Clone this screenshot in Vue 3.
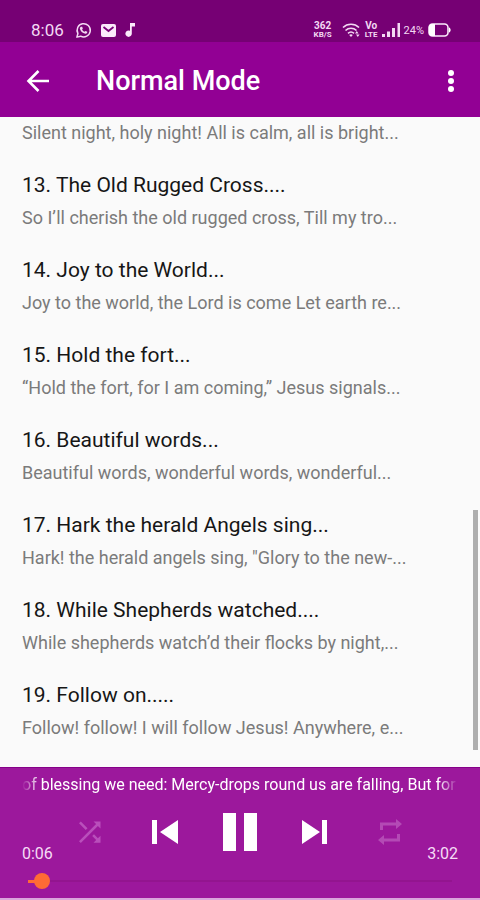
<template>
  <div class="screen">
    <div class="status-bar">
      <div class="status-left">
        <span class="clock">8:06</span>
        <svg width="17" height="17" viewBox="0 0 18 18">
          <path d="M2 16l1.1-3.8A7 7 0 1 1 6 15z" fill="none" stroke="#f3d9f3" stroke-width="1.6" stroke-linejoin="round" />
          <path d="M6.3 4.9l1.3.2.7 1.8-.8 1a5 5 0 0 0 2.6 2.5l1-.9 1.9.9c.2 1.4-.9 2.2-2 2.1-3.1-.4-5.4-2.7-5.900-5.500 0-.9.4-1.700 1.200-2.100z" fill="#f3d9f3" />
        </svg>
        <svg width="15" height="13" viewBox="0 0 15 13">
          <rect width="15" height="13" rx="2" fill="#fbeafb" />
          <path d="M2.500 3l5 4 5-4" fill="none" stroke="#780078" stroke-width="1.800" />
        </svg>
        <svg width="11" height="14" viewBox="0 0 11 14">
          <path d="M5 0h5v3.500H6.800v7.200A3.200 3.200 0 1 1 5 7.800z" fill="#fbeafb" />
        </svg>
      </div>
      <div class="status-right">
        <span class="stacked speed"><span class="top">362</span><span>KB/S</span></span>
        <svg width="19" height="15" viewBox="0 0 19 15">
          <g fill="none" stroke="#f3d9f3" stroke-width="1.600">
            <path d="M1 4.500a11.500 11.500 0 0 1 16 0" />
            <path d="M3.500 7.500a8 8 0 0 1 11 0" />
            <path d="M6 10.300a4.600 4.600 0 0 1 6 0" />
          </g>
          <path d="M7.200 12a2.600 2.600 0 0 1 3.600 0L9 14zM13 10.500l1.800-2.500 1.700 2.500zM14 11.500h3.600L15.800 14z" fill="#f3d9f3" />
        </svg>
        <span class="stacked"><span class="top">Vo</span><span>LTE</span></span>
        <svg width="18" height="14" viewBox="0 0 18 14">
          <path d="M0 11h3v3H0zM5 8.500h3V14H5zM10 5h3v9h-3zM15.500 0H18v14h-2.500z" fill="#f3d9f3" />
        </svg>
        <span class="percent">24%</span>
        <svg width="23" height="14" viewBox="0 0 23 14">
          <rect x="1" y="1" width="19" height="12" rx="3.500" fill="none" stroke="#fbeafb" stroke-width="1.600" />
          <path d="M4 1h3v12H4a3 3 0 0 1-3-3V4a3 3 0 0 1 3-3zM21 4.500c2.200.6 2.200 4.400 0 5z" fill="#fff" />
        </svg>
      </div>
    </div>

    <header class="toolbar">
      <button class="icon-btn" aria-label="Back">
        <svg width="24" height="24" viewBox="0 0 24 24">
          <path d="M12.500 2L2.500 12l10 10M2.500 12H23" fill="none" stroke="#fff" stroke-width="2.600" />
        </svg>
      </button>
      <h1>Normal Mode</h1>
      <button class="icon-btn" aria-label="More options">
        <svg width="8" height="24" viewBox="0 0 8 24">
          <g fill="#fff">
            <circle cx="4" cy="4" r="3" />
            <circle cx="4" cy="12" r="3" />
            <circle cx="4" cy="20" r="3" />
          </g>
        </svg>
      </button>
    </header>

    <main class="list-area">
      <ul class="song-list">
        <li v-for="song in songs" :key="song.line">
          <h2 v-if="song.title">{{ song.title }}</h2>
          <p>{{ song.line }}</p>
        </li>
      </ul>
      <div class="scroll-thumb"></div>
    </main>

    <footer class="player">
      <div class="ticker">of blessing we need: Mercy-drops round us are falling, But for</div>
      <div class="deck">
        <span class="time">{{ formatTime(position) }}</span>
        <div class="controls">
          <button class="icon-btn shuffle" aria-label="Shuffle">
            <svg width="24" height="24" viewBox="0 0 24 24">
              <path d="M9.500 8.200L2.800 1.500 1 3.300 7.700 10zM15.500 1.500l2.600 2.600L1 21.200 2.800 23 19.900 5.900l2.600 2.600v-7zM16 14.200l-1.800 1.800 4 4-2.700 2.700h7v-7l-2.600 2.600z" fill="currentColor" />
            </svg>
          </button>
          <button class="icon-btn" aria-label="Previous">
            <svg width="26" height="26" viewBox="0 0 26 26">
              <path d="M0 1h5v24H0zM26 1v24L8 13z" fill="currentColor" />
            </svg>
          </button>
          <button class="icon-btn" aria-label="Pause">
            <svg width="34" height="40" viewBox="0 0 34 40">
              <path d="M0 1h13v38H0zM21 1h13v38H21z" fill="currentColor" />
            </svg>
          </button>
          <button class="icon-btn" aria-label="Next">
            <svg width="26" height="26" viewBox="0 0 26 26">
              <path d="M0 1l18 12L0 25zM20 1h5v24h-5z" fill="currentColor" />
            </svg>
          </button>
          <button class="icon-btn repeat" aria-label="Repeat">
            <svg width="24" height="26" viewBox="0 0 24 26">
              <path d="M2 3.500h16V0l6 5-6 5V6.500H5V11H2zM22 22.500H6V26l-6-5 6-5v3.500h13V15h3z" fill="currentColor" />
            </svg>
          </button>
        </div>
        <span class="time">{{ formatTime(duration) }}</span>
      </div>
      <input
        v-model.number="position"
        class="seek"
        type="range"
        min="0"
        :max="duration"
        aria-label="Seek"
        :style="{ '--played': position / duration }"
      />
    </footer>
  </div>
</template>

<script setup>
import { ref } from 'vue'

const songs = [
  { line: 'Silent night, holy night! All is calm, all is bright...' },
  { title: '13. The Old Rugged Cross....', line: 'So I’ll cherish the old rugged cross, Till my tro...' },
  { title: '14. Joy to the World...', line: 'Joy to the world, the Lord is come Let earth re...' },
  { title: '15. Hold the fort...', line: '“Hold the fort, for I am coming,” Jesus signals...' },
  { title: '16. Beautiful words...', line: 'Beautiful words, wonderful words, wonderful...' },
  { title: '17. Hark the herald Angels sing...', line: 'Hark! the herald angels sing, "Glory to the new-...' },
  { title: '18. While Shepherds watched....', line: 'While shepherds watch’d their flocks by night,...' },
  { title: '19. Follow on.....', line: 'Follow! follow! I will follow Jesus! Anywhere, e...' }
]

const position = ref(6)
const duration = ref(182)

function formatTime(seconds) {
  return Math.floor(seconds / 60) + ':' + String(seconds % 60).padStart(2, '0')
}
</script>

<style>
body {
  background: #d9a6dc;
}
</style>

<style scoped>
.screen {
  display: flex;
  flex-direction: column;
  box-sizing: border-box;
  min-height: 100vh;
  padding-bottom: 2px;
  font-family: Roboto, "Liberation Sans", sans-serif;
  color: #fff;
}

.status-bar {
  display: flex;
  justify-content: space-between;
  box-sizing: border-box;
  height: 42px;
  padding: 18px 29px 0 31px;
  background: #760074;
  color: #f3d9f3;
}

.status-left,
.status-right {
  display: flex;
  align-items: center;
  height: 24px;
}

.status-left {
  gap: 9px;
}

.status-right {
  gap: 4px;
}

.clock {
  width: 35px;
  font-size: 17px;
}

.stacked {
  display: flex;
  flex-direction: column;
  font-size: 8px;
  font-weight: 700;
  line-height: 8px;
  text-align: center;
}

.stacked .top {
  font-size: 10px;
  line-height: 10px;
}

.speed {
  margin-right: 6px;
}

.percent {
  font-size: 11px;
}

.toolbar {
  display: flex;
  align-items: center;
  box-sizing: border-box;
  height: 75px;
  padding: 2px 25px 0 26px;
  background: #920094;
}

.toolbar h1 {
  flex: 1;
  margin: 0 0 0 46px;
  font-size: 27px;
  font-weight: 500;
  line-height: 32px;
}

.icon-btn {
  display: flex;
  padding: 0;
  border: none;
  background: none;
  color: #fff;
  cursor: pointer;
}

.shuffle {
  color: #b94fbb;
}

.repeat {
  color: #b44ab5;
}

.list-area {
  position: relative;
  flex: 1;
  background: #fafafa;
}

.song-list {
  margin: 0;
  padding: 2px 22px 20px;
  list-style: none;
}

.song-list li + li {
  margin-top: 20px;
}

.song-list h2 {
  margin: 0;
  color: #161616;
  font-size: 21px;
  font-weight: 400;
  line-height: 37px;
}

.song-list p {
  margin: 0;
  color: #7b7b7b;
  font-size: 18px;
  line-height: 28px;
}

.song-list h2,
.song-list p {
  overflow: hidden;
  white-space: nowrap;
}

.scroll-thumb {
  position: absolute;
  right: 2px;
  bottom: 17px;
  width: 5px;
  height: 37%;
  background: #aeaeae;
}

.player {
  padding: 5px 20px 8px;
  border-top: 1px solid #850088;
  background: #9c189c;
}

.ticker {
  overflow: hidden;
  margin: 0 2px;
  font-size: 16px;
  line-height: 24px;
  white-space: nowrap;
  color: #fff;
  mask-image: linear-gradient(to right, transparent, #000 18px, #000 calc(100% - 20px), transparent);
}

.deck {
  display: flex;
  align-items: flex-end;
  height: 50px;
  margin: 15px 2px 0;
}

.controls {
  display: grid;
  flex: 1;
  grid-template-columns: repeat(5, 1fr);
  justify-items: center;
  align-items: center;
  align-self: flex-start;
}

.time {
  font-size: 16px;
  line-height: 16px;
  color: #f6dcf6;
}

.seek {
  --track: calc(100% - 16px);
  display: block;
  width: 100%;
  height: 18px;
  margin: 10px 0 0;
  appearance: none;
  background: linear-gradient(#ff6b35, #ff6b35) 8px 50% / calc(var(--track) * var(--played)) 3px no-repeat,
    linear-gradient(#93158f, #93158f) 8px 50% / var(--track) 2px no-repeat;
}

.seek::-webkit-slider-thumb {
  appearance: none;
  width: 16px;
  height: 16px;
  border: none;
  border-radius: 50%;
  background: #ff6b35;
}
</style>
